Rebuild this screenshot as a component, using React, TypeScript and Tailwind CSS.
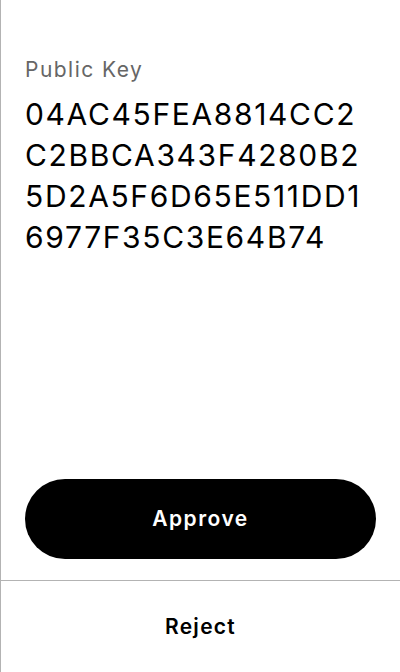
import React from 'react';

// 公開鍵の承認画面
const keyLines = ['04AC45FEA8814CC2', 'C2BBCA343F4280B2', '5D2A5F6D65E511DD1', '6977F35C3E64B74'];

const App: React.FC = () => {
  return (
    <div
      className="flex h-[672px] w-[400px] flex-col border-l border-[#b3b3b3] bg-white text-black"
      style={{ fontFamily: 'Inter, "Noto Sans", sans-serif' }}
    >
      <div className="flex-1 px-6 pt-[56px]">
        <div className="text-[21px] leading-7 tracking-[0.07em] text-[#666666]">Public Key</div>
        <div className="mt-[10px] text-[30px] leading-[41px] tracking-[0.055em]">
          {keyLines.map(line => (
            <div key={line}>{line}</div>
          ))}
        </div>
      </div>

      <div className="px-6 pb-[21px]">
        <button className="flex h-[80px] w-full items-center justify-center rounded-full bg-black text-[21px] font-semibold tracking-[0.07em] text-white">
          Approve
        </button>
      </div>

      <div className="flex h-[92px] items-center justify-center border-t border-[#b3b3b3]">
        <button className="text-[21px] font-semibold tracking-[0.06em] text-black">Reject</button>
      </div>
    </div>
  );
};

export default App;
